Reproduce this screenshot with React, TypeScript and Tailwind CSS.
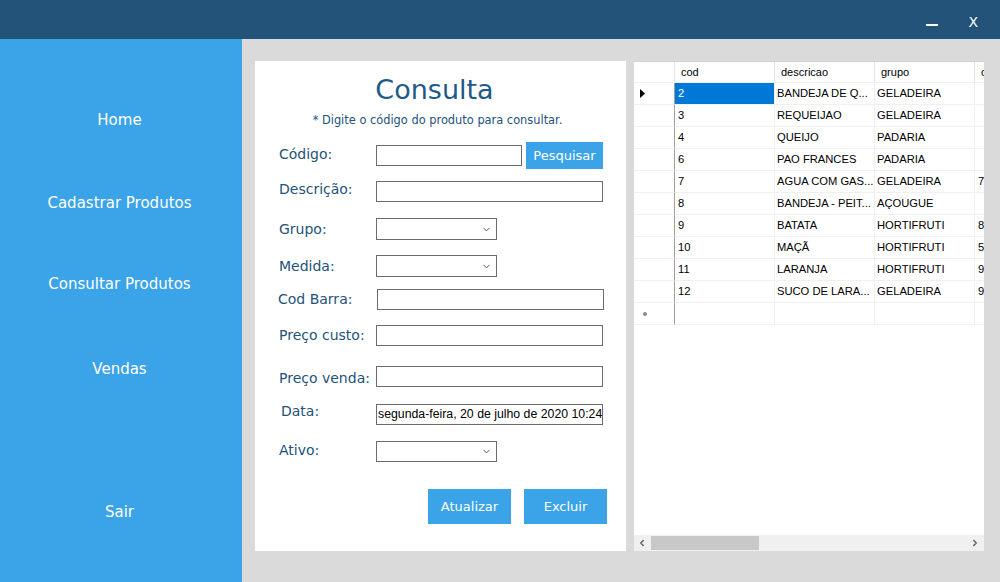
import { ChevronDown, ChevronLeft, ChevronRight } from "lucide-react";

const menu = [
  { label: "Home", mt: "mt-[61px]" },
  { label: "Cadastrar Produtos", mt: "mt-[43px]" },
  { label: "Consultar Produtos", mt: "mt-[41px]" },
  { label: "Vendas", mt: "mt-[45px]" },
  { label: "Sair", mt: "mt-[103px]" },
];

const rows = [
  { cod: "2", desc: "BANDEJA DE Q...", grupo: "GELADEIRA", extra: "" },
  { cod: "3", desc: "REQUEIJAO", grupo: "GELADEIRA", extra: "" },
  { cod: "4", desc: "QUEIJO", grupo: "PADARIA", extra: "" },
  { cod: "6", desc: "PAO FRANCES", grupo: "PADARIA", extra: "" },
  { cod: "7", desc: "AGUA COM GAS...", grupo: "GELADEIRA", extra: "7" },
  { cod: "8", desc: "BANDEJA - PEIT...", grupo: "AÇOUGUE", extra: "" },
  { cod: "9", desc: "BATATA", grupo: "HORTIFRUTI", extra: "8" },
  { cod: "10", desc: "MAÇÃ", grupo: "HORTIFRUTI", extra: "5" },
  { cod: "11", desc: "LARANJA", grupo: "HORTIFRUTI", extra: "9" },
  { cod: "12", desc: "SUCO DE LARA...", grupo: "GELADEIRA", extra: "9" },
];

const label = "w-[97px] shrink-0 text-[14px] text-[#24527a] whitespace-nowrap";
const box = "h-full border border-[#6b6b6b] bg-white";

function Select() {
  return (
    <div className={`${box} w-[121px] flex items-center justify-end pr-[4px]`}>
      <ChevronDown className="w-[11px] h-[11px] text-[#333]" strokeWidth={1.75} />
    </div>
  );
}

export default function App() {
  return (
    <div className="w-[1000px] h-[582px] flex flex-col bg-[#dadada] overflow-hidden font-['DejaVu_Sans',sans-serif]">
      {/* title bar */}
      <div className="h-[39px] shrink-0 bg-[#235379] flex items-start justify-end text-white">
        <div className="mt-[24px] mr-[30px] w-[12px] h-[2px] bg-white" />
        <span className="mt-[15px] mr-[22px] text-[14px] leading-none">X</span>
      </div>

      <div className="flex flex-1 min-h-0">
        {/* sidebar */}
        <div className="w-[242px] shrink-0 bg-[#3ba3e8] flex flex-col pr-[3px]">
          {menu.map((m) => (
            <div key={m.label} className={`${m.mt} h-[40px] flex items-center justify-center text-white text-[15px]`}>
              {m.label}
            </div>
          ))}
        </div>

        {/* content */}
        <div className="flex-1 flex pl-[13px] pt-[22px] pb-[31px] gap-[8px]">
          {/* form panel */}
          <div className="w-[371px] bg-white flex flex-col pt-[11px] pl-[24px] pr-[19px]">
            <div className="h-[36px] leading-[36px] text-center text-[27px] text-[#1f5a86] pr-[17px]">Consulta</div>
            <div className="mt-[4px] h-[16px] leading-[16px] text-center text-[11.4px] text-[#24527a] pr-[11px] whitespace-nowrap">
              * Digite o código do produto para consultar.
            </div>

            <div className="mt-[14px] h-[27px] flex items-center">
              <span className={`${label} -mt-[3px]`}>Código:</span>
              <div className="h-[21px] w-[146px] border border-[#6b6b6b]" />
              <button className="ml-[4px] h-[27px] w-[77px] bg-[#3ba3e8] text-white text-[13px]">Pesquisar</button>
            </div>

            <div className="mt-[12px] h-[21px] flex items-center">
              <span className={`${label} -mt-[5px]`}>Descrição:</span>
              <div className={`${box} w-[227px]`} />
            </div>

            <div className="mt-[16px] h-[22px] flex items-center">
              <span className={label}>Grupo:</span>
              <Select />
            </div>

            <div className="mt-[15px] h-[22px] flex items-center">
              <span className={label}>Medida:</span>
              <Select />
            </div>

            <div className="mt-[12px] h-[21px] flex items-center">
              <span className={`${label} -ml-[1px] w-[99px]`}>Cod Barra:</span>
              <div className={`${box} w-[227px]`} />
            </div>

            <div className="mt-[15px] h-[21px] flex items-center">
              <span className={label}>Preço custo:</span>
              <div className={`${box} w-[227px]`} />
            </div>

            <div className="mt-[20px] h-[21px] flex items-center">
              <span className={`${label} mt-[3px]`}>Preço venda:</span>
              <div className={`${box} w-[227px]`} />
            </div>

            <div className="mt-[17px] h-[21px] flex items-center">
              <span className={`${label} -mt-[7px] pl-[2px]`}>Data:</span>
              <div className={`${box} w-[227px] flex items-center pl-[1px] overflow-hidden whitespace-nowrap text-[12.3px] text-black font-['Liberation_Sans',sans-serif]`}>
                segunda-feira, 20 de julho de 2020 10:24
              </div>
            </div>

            <div className="mt-[16px] h-[21px] flex items-center">
              <span className={`${label} -mt-[3px]`}>Ativo:</span>
              <Select />
            </div>

            <div className="mt-[27px] flex justify-end gap-[13px]">
              <button className="h-[35px] w-[83px] bg-[#3ba3e8] text-white text-[13px]">Atualizar</button>
              <button className="h-[35px] w-[83px] bg-[#3ba3e8] text-white text-[13px]">Excluir</button>
            </div>
          </div>

          {/* data grid */}
          <div className="w-[350px] bg-white flex flex-col overflow-hidden font-['Liberation_Sans',sans-serif] text-[11.2px] text-black border-t border-[#d4d4d4]">
            <div className="h-[21px] flex border-b border-[#f0f0f0]">
              <div className="w-[41px] shrink-0 border-r border-[#e3e3e3]" />
              <div className="w-[100px] shrink-0 border-r border-[#e3e3e3] pl-[6px] flex items-center text-[11px]">cod</div>
              <div className="w-[100px] shrink-0 border-r border-[#e3e3e3] pl-[6px] flex items-center text-[11px]">descricao</div>
              <div className="w-[100px] shrink-0 border-r border-[#e3e3e3] pl-[6px] flex items-center text-[11px]">grupo</div>
              <div className="flex-1 pl-[6px] flex items-center text-[11px] overflow-hidden">c</div>
            </div>
            {rows.map((r, i) => (
              <div key={r.cod} className="h-[22px] flex">
                <div className="w-[41px] shrink-0 border-r border-[#a0a0a0] border-b border-b-[#f0f0f0] flex items-center pl-[6px]">
                  {i === 0 && (
                    <svg width="6" height="9" viewBox="0 0 6 9">
                      <path d="M0 0 L5 4.5 L0 9 Z" fill="#000" />
                    </svg>
                  )}
                </div>
                <div className={`w-[100px] shrink-0 border-r border-b border-[#f0f0f0] pl-[3px] flex items-center ${i === 0 ? "bg-[#0078d7] text-white" : ""}`}>
                  {r.cod}
                </div>
                <div className="w-[100px] shrink-0 border-r border-b border-[#f0f0f0] pl-[2px] flex items-center whitespace-nowrap overflow-hidden">{r.desc}</div>
                <div className="w-[100px] shrink-0 border-r border-b border-[#f0f0f0] pl-[2px] flex items-center">{r.grupo}</div>
                <div className="flex-1 border-b border-[#f0f0f0] pl-[3px] flex items-center">{r.extra}</div>
              </div>
            ))}
            <div className="h-[22px] flex">
              <div className="w-[41px] shrink-0 border-r border-[#a0a0a0] border-b border-b-[#f0f0f0] flex items-center pl-[9px]">
                <span className="w-[4px] h-[4px] rounded-full bg-[#8a8a8a]" />
              </div>
              <div className="w-[100px] shrink-0 border-r border-b border-[#f0f0f0]" />
              <div className="w-[100px] shrink-0 border-r border-b border-[#f0f0f0]" />
              <div className="w-[100px] shrink-0 border-r border-b border-[#f0f0f0]" />
              <div className="flex-1 border-b border-[#f0f0f0]" />
            </div>
            <div className="flex-1" />
            <div className="h-[16px] bg-[#f0f0f0] flex items-center">
              <ChevronLeft className="w-[10px] h-[10px] ml-[3px] text-[#606060]" strokeWidth={3.5} />
              <div className="ml-[4px] h-[14px] w-[108px] bg-[#c8c8c8]" />
              <div className="flex-1" />
              <ChevronRight className="w-[10px] h-[10px] mr-[4px] text-[#606060]" strokeWidth={3.5} />
            </div>
          </div>
        </div>
      </div>
    </div>
  );
}
